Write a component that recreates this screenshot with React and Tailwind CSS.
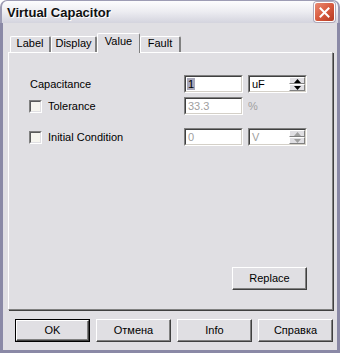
import React from 'react';

function Sunken({ className = '', children }) {
  return (
    <div className={`border border-t-[#808080] border-l-[#808080] border-b-white border-r-white ${className}`}>
      <div className="w-full h-full border border-t-[#404040] border-l-[#404040] border-b-[#d4d0c8] border-r-[#d4d0c8] bg-white flex items-center">
        {children}
      </div>
    </div>
  );
}

function Checkbox() {
  return (
    <div className="w-[13px] h-[13px] border border-t-[#808080] border-l-[#808080] border-b-white border-r-white">
      <div className="w-full h-full border border-t-[#5a5a5a] border-l-[#5a5a5a] border-b-[#e0dfe3] border-r-[#e0dfe3] bg-[#f6f5ef]" />
    </div>
  );
}

function Tri({ up, disabled }) {
  const color = disabled ? '#a0a0a0' : '#000';
  return (
    <svg width="7" height="4" viewBox="0 0 7 4">
      {up ? <polygon points="3.5,0 7,4 0,4" fill={color} /> : <polygon points="0,0 7,0 3.5,4" fill={color} />}
    </svg>
  );
}

function SpinBtn({ up, disabled }) {
  return (
    <div className="flex-1 flex items-center justify-center bg-[#e0dfe3] border border-t-white border-l-white border-b-[#808080] border-r-[#808080]">
      <Tri up={up} disabled={disabled} />
    </div>
  );
}

function Combo({ value, disabled }) {
  return (
    <Sunken className="w-[59px] h-[18px]">
      <span className={`flex-1 pl-[2px] ${disabled ? 'text-[#a0a0a0]' : 'text-black'}`}>{value}</span>
      <div className="w-[16px] h-full flex flex-col">
        <SpinBtn up disabled={disabled} />
        <SpinBtn disabled={disabled} />
      </div>
    </Sunken>
  );
}

function Button({ children, def, className = '' }) {
  const inner = (
    <div className="w-full h-full flex items-center justify-center border border-t-white border-l-white border-b-[#404040] border-r-[#404040] shadow-[inset_-1px_-1px_0_#808080] bg-[#e0dfe3] text-black">
      {children}
    </div>
  );
  if (def) {
    return <div className={`border border-black ${className}`}>{inner}</div>;
  }
  return <div className={className}>{inner}</div>;
}

function Tab({ label, active, className = '' }) {
  if (active) {
    return (
      <div className={`relative z-10 h-[20px] -mb-[1px] bg-[#e0dfe3] border-t border-l border-r border-t-white border-l-white border-r-[#808080] rounded-t-[2px] flex justify-center pt-[2px] ${className}`}>
        {label}
      </div>
    );
  }
  return (
    <div className={`h-[16px] bg-[#e0dfe3] border-t border-l border-r-2 border-t-white border-l-white border-r-[#808080] rounded-t-[2px] flex justify-center pt-[1px] ${className}`}>
      {label}
    </div>
  );
}

export default function App() {
  return (
    <div className="w-[340px] h-[353px] flex flex-col font-['Liberation_Sans',Arial,sans-serif] text-[11px] leading-none text-black overflow-hidden">
      {/* Title bar */}
      <div className="h-[23px] shrink-0 flex items-center justify-between pl-[5px] pr-[3px] rounded-t-[7px] bg-gradient-to-b from-[#fdfdfe] via-[#ececf1] to-[#d4d4de] border-x-[2px] border-t border-[#9d9cb4]">
        <span className="font-bold text-[13px] text-[#111] [text-shadow:1px_1px_0_#ffffff]">Virtual Capacitor</span>
        <div className="w-[21px] h-[20px] rounded-[3px] border border-white bg-gradient-to-br from-[#e98a72] via-[#d85a3e] to-[#b53a22] flex items-center justify-center shadow-[0_0_0_1px_#b0a8b8]">
          <svg width="11" height="11" viewBox="0 0 11 11">
            <path d="M1.5 1.5 L9.5 9.5 M9.5 1.5 L1.5 9.5" stroke="#fff" strokeWidth="2" strokeLinecap="square" />
          </svg>
        </div>
      </div>

      {/* Body */}
      <div className="flex-1 flex flex-col bg-[#e0dfe3] border-x-[3px] border-b-[3px] border-[#8a89a6] pt-[10px] pl-[5px] pr-[4px] pb-[8px]">
        <div className="flex items-end h-[19px] ml-[2px]">
          <Tab label="Label" className="w-[41px]" />
          <Tab label="Display" className="w-[46px]" />
          <Tab label="Value" active className="w-[43px]" />
          <Tab label="Fault" className="w-[41px]" />
        </div>

        <div className="h-[258px] flex flex-col border border-t-white border-l-white border-r-[#808080] border-b-[#808080] shadow-[1px_1px_0_#404040] pt-[22px] pl-[20px] pb-[19px]">
          <div className="flex items-center h-[18px]">
            <div className="w-[155px] pl-[1px]">Capacitance</div>
            <Sunken className="w-[59px] h-[18px]">
              <span className="ml-[1px] bg-[#a8a8ba] px-[1px] leading-[12px]">1</span>
            </Sunken>
            <div className="w-[5px]" />
            <Combo value="uF" />
          </div>

          <div className="flex items-center h-[18px] mt-[4px]">
            <div className="w-[155px] flex items-center gap-[6px]">
              <Checkbox />
              <span>Tolerance</span>
            </div>
            <Sunken className="w-[59px] h-[18px]">
              <span className="pl-[2px] text-[#a0a0a0]">33.3</span>
            </Sunken>
            <span className="ml-[5px] text-[#a0a0a0]">%</span>
          </div>

          <div className="flex items-center h-[18px] mt-[13px]">
            <div className="w-[155px] flex items-center gap-[6px]">
              <Checkbox />
              <span>Initial Condition</span>
            </div>
            <Sunken className="w-[59px] h-[18px]">
              <span className="pl-[2px] text-[#a0a0a0]">0</span>
            </Sunken>
            <div className="w-[5px]" />
            <Combo value="V" disabled />
          </div>

          <div className="mt-auto w-[278px] flex justify-end">
            <Button className="w-[75px] h-[23px]">Replace</Button>
          </div>
        </div>

        <div className="flex justify-end gap-[6px] mt-[9px]">
          <Button def className="w-[75px] h-[23px]">OK</Button>
          <Button className="w-[75px] h-[23px]">Отмена</Button>
          <Button className="w-[75px] h-[23px]">Info</Button>
          <Button className="w-[75px] h-[23px]">Справка</Button>
        </div>
      </div>
    </div>
  );
}
